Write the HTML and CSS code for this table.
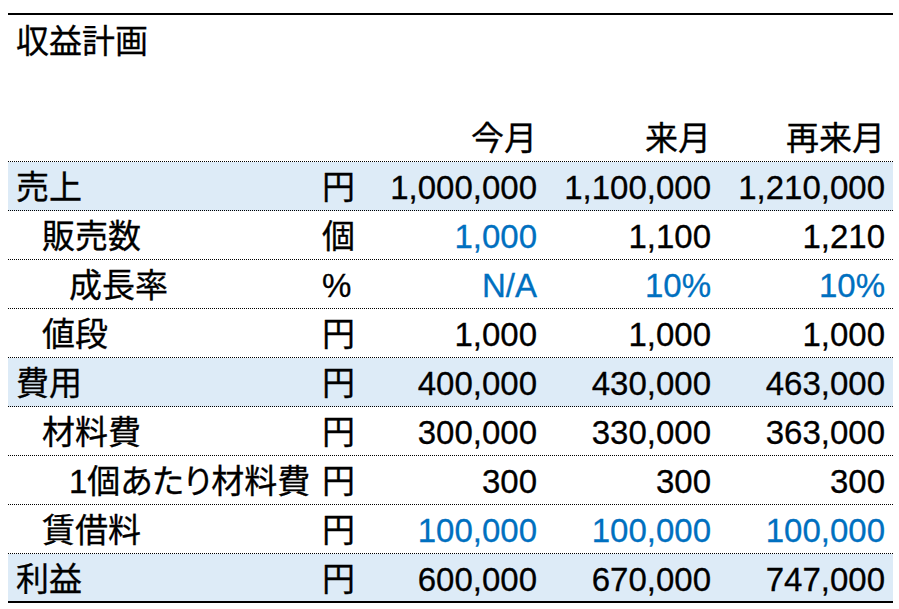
FILE: index.html
```html
<!DOCTYPE html>
<html lang="ja">
<head>
<meta charset="utf-8">
<title>収益計画</title>
<link rel="stylesheet" href="styles.css">
</head>
<body>
<div class="sheet">
  <div class="row title-row"><div class="cell label">収益計画</div></div>
  <div class="row blank-row"></div>
  <div class="row head-row">
    <div class="cell label"></div><div class="cell unit"></div>
    <div class="cell num">今月</div><div class="cell num">来月</div><div class="cell num">再来月</div>
  </div>
  <div class="row data hl">
    <div class="cell label">売上</div><div class="cell unit">円</div>
    <div class="cell num">1,000,000</div><div class="cell num">1,100,000</div><div class="cell num">1,210,000</div>
  </div>
  <div class="row data">
    <div class="cell label lv1">販売数</div><div class="cell unit">個</div>
    <div class="cell num blue">1,000</div><div class="cell num">1,100</div><div class="cell num">1,210</div>
  </div>
  <div class="row data">
    <div class="cell label lv2">成長率</div><div class="cell unit">%</div>
    <div class="cell num blue">N/A</div><div class="cell num blue">10%</div><div class="cell num blue">10%</div>
  </div>
  <div class="row data">
    <div class="cell label lv1">値段</div><div class="cell unit">円</div>
    <div class="cell num">1,000</div><div class="cell num">1,000</div><div class="cell num">1,000</div>
  </div>
  <div class="row data hl">
    <div class="cell label">費用</div><div class="cell unit">円</div>
    <div class="cell num">400,000</div><div class="cell num">430,000</div><div class="cell num">463,000</div>
  </div>
  <div class="row data">
    <div class="cell label lv1">材料費</div><div class="cell unit">円</div>
    <div class="cell num">300,000</div><div class="cell num">330,000</div><div class="cell num">363,000</div>
  </div>
  <div class="row data">
    <div class="cell label lv2">1個<span class="kana">あたり</span>材料費</div><div class="cell unit">円</div>
    <div class="cell num">300</div><div class="cell num">300</div><div class="cell num">300</div>
  </div>
  <div class="row data">
    <div class="cell label lv1">賃借料</div><div class="cell unit">円</div>
    <div class="cell num blue">100,000</div><div class="cell num blue">100,000</div><div class="cell num blue">100,000</div>
  </div>
  <div class="row data hl last">
    <div class="cell label">利益</div><div class="cell unit">円</div>
    <div class="cell num">600,000</div><div class="cell num">670,000</div><div class="cell num">747,000</div>
  </div>
</div>
</body>
</html>
```

FILE: styles.css
```css
html, body {
  margin: 0;
  padding: 0;
  background: #ffffff;
}

body {
  padding: 13px 0 0 8px;
  font-family: "Liberation Sans", "Noto Sans CJK JP", sans-serif;
  font-size: 33px;
  color: #000000;
  -webkit-text-stroke: 0.3px currentColor;
}

.sheet {
  width: 885px;
  border-top: 2px solid #000000;
}

.row {
  display: grid;
  grid-template-columns: 306px 57px 174px 174px 174px;
  height: 49px;
  box-sizing: border-box;
}

.head-row,
.data {
  border-bottom: 1px dotted #000000;
}

.data.last {
  border-bottom: 2px solid #000000;
}

.hl {
  background: #ddebf7;
}

.cell {
  padding: 2px 8px 0;
  line-height: 48px;
  white-space: nowrap;
  overflow: visible;
}

.title-row .cell {
  line-height: 49px;
  grid-column: 1 / -1;
}

.unit {
  text-align: left;
}

.num {
  text-align: right;
}

.lv1 {
  padding-left: 34px;
}

.lv2 {
  padding-left: 61px;
}

.kana {
  font-feature-settings: "palt";
}

.blue {
  color: #0070c0;
}
```
